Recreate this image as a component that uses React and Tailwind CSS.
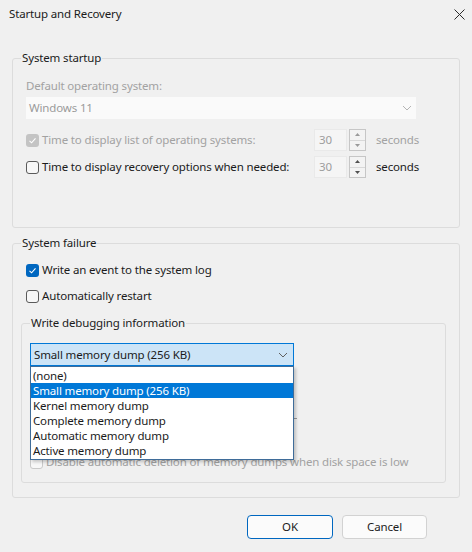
import { useState } from "react";

const dumpTypes = [
    "(none)",
    "Small memory dump (256 KB)",
    "Kernel memory dump",
    "Complete memory dump",
    "Automatic memory dump",
    "Active memory dump"
];

function Check({ checked, disabled }) {
    if (checked) {
        return (
            <span
                className={`flex h-[13px] w-[13px] shrink-0 items-center justify-center rounded-[3px] ${
                    disabled ? "bg-[#c4c4c4]" : "bg-[#0067c0]"
                }`}
            >
                <svg width="9" height="9" viewBox="0 0 9 9" fill="none">
                    <path d="M1.5 4.8 3.6 6.8 7.5 2.3" stroke="white" strokeWidth="1.1" />
                </svg>
            </span>
        );
    }
    return (
        <span
            className={`h-[13px] w-[13px] shrink-0 rounded-[3px] border bg-[#f7f7f7] ${
                disabled ? "border-[#c9c9c9]" : "border-[#5a5a5a]"
            }`}
        />
    );
}

function Chevron({ color }) {
    return (
        <svg width="10" height="6" viewBox="0 0 10 6" fill="none">
            <path d="M1 1 5 5 9 1" stroke={color} strokeWidth="1" />
        </svg>
    );
}

function Spinner({ value, disabled }) {
    const arrow = disabled ? "#9a9a9a" : "#505050";
    return (
        <div className="flex items-center">
            <div className="flex h-[22px] w-[33px] items-center border border-[#e9e9e9] bg-[#f5f5f5] pl-[4px] text-[#9d9d9d]">
                {value}
            </div>
            <div className="ml-[2px] flex h-[22px] w-[17px] flex-col border border-[#c6c6c6] bg-[#f3f3f3]">
                <div className="flex flex-1 items-center justify-center border-b border-[#d8d8d8]">
                    <svg width="5" height="3" viewBox="0 0 5 3">
                        <path d="M0 3 2.5 0 5 3Z" fill={arrow} />
                    </svg>
                </div>
                <div className="flex flex-1 items-center justify-center">
                    <svg width="5" height="3" viewBox="0 0 5 3">
                        <path d="M0 0 2.5 3 5 0Z" fill={arrow} />
                    </svg>
                </div>
            </div>
        </div>
    );
}

export default function App() {
    const [selected] = useState(1);

    return (
        <div
            className="relative h-[552px] w-[472px] overflow-hidden bg-[#f0f0f0] text-[11.5px] leading-[16px] tracking-[-0.15px] text-[#1b1b1b]"
            style={{ fontFamily: '"Noto Sans", "Open Sans", sans-serif' }}
        >
            {/* title bar */}
            <div className="flex h-[28px] items-center justify-between pl-[9px] pr-[7px]">
                <span>Startup and Recovery</span>
                <svg width="11" height="11" viewBox="0 0 11 11" fill="none">
                    <path d="M0.5 0.5 10.5 10.5M10.5 0.5 0.5 10.5" stroke="#2b2b2b" strokeWidth="1" />
                </svg>
            </div>

            <div className="px-[12px] pt-[22px]">
                {/* System startup */}
                <fieldset className="h-[178px] rounded-[3px] border border-[#dcdcdc] px-[13px] pt-[12px]">
                    <legend className="-ml-[5px] px-[1px] leading-[16px]">System startup</legend>
                    <div className="text-[#a2a2a2]">Default operating system:</div>
                    <div className="mt-[3px] flex h-[22px] w-[390px] items-center justify-between bg-[#fafafa] pl-[3px] pr-[4px] text-[#9b9b9b]">
                        <span>Windows 11</span>
                        <Chevron color="#b4b4b4" />
                    </div>

                    <div className="mt-[10px] flex h-[22px] items-center">
                        <div className="flex w-[288px] items-center gap-[3px] text-[#a2a2a2]">
                            <Check checked disabled />
                            <span>Time to display list of operating systems:</span>
                        </div>
                        <Spinner value="30" disabled />
                        <span className="ml-[10px] text-[#a2a2a2]">seconds</span>
                    </div>

                    <div className="mt-[5px] flex h-[22px] items-center">
                        <div className="flex w-[288px] items-center gap-[3px]">
                            <Check />
                            <span>Time to display recovery options when needed:</span>
                        </div>
                        <Spinner value="30" />
                        <span className="ml-[10px]">seconds</span>
                    </div>
                </fieldset>

                {/* System failure */}
                <fieldset className="mt-[7px] h-[263px] rounded-[3px] border border-[#dcdcdc] pl-[13px] pr-[13px] pt-[11px]">
                    <legend className="-ml-[5px] px-[1px] leading-[16px]">System failure</legend>
                    <div className="flex items-center gap-[3px]">
                        <Check checked />
                        <span>Write an event to the system log</span>
                    </div>
                    <div className="mt-[10px] flex items-center gap-[3px]">
                        <Check />
                        <span>Automatically restart</span>
                    </div>

                    <fieldset className="-ml-[5px] mt-[11px] h-[168px] rounded-[3px] border border-[#dcdcdc] px-[8px] pt-[12px]">
                        <legend className="px-[1px] leading-[16px]">Write debugging information</legend>

                        <div className="relative w-[264px]">
                            <div className="flex h-[23px] items-center justify-between border border-[#0078d7] bg-[#cce4f7] pl-[3px] pr-[5px]">
                                <span>{dumpTypes[selected]}</span>
                                <Chevron color="#606060" />
                            </div>
                            {/* open list */}
                            <ul className="absolute left-0 top-full z-10 w-full border border-[#3f6c99] bg-white py-[1px] shadow-[2px_2px_3px_rgba(0,0,0,0.2)]">
                                {dumpTypes.map((t, i) => (
                                    <li
                                        key={t}
                                        className={`h-[15px] pl-[2px] leading-[15px] ${
                                            i === selected ? "bg-[#0078d7] text-white" : ""
                                        }`}
                                    >
                                        {t}
                                    </li>
                                ))}
                            </ul>
                        </div>

                        {/* dump file path box, sits under the open list */}
                        <div className="mt-[30px] h-[23px] w-[267px] border-b border-[#9a9a9a]" />

                        <div className="mt-[35px] flex items-center gap-[3px] text-[#a2a2a2]">
                            <Check disabled />
                            <span>Disable automatic deletion of memory dumps when disk space is low</span>
                        </div>
                    </fieldset>
                </fieldset>

                <div className="mt-[17px] flex justify-end gap-[9px] pr-[33px]">
                    <button className="h-[24px] w-[86px] rounded-[4px] border border-[#0067c0] bg-[#fbfbfb]">
                        OK
                    </button>
                    <button className="h-[24px] w-[85px] rounded-[4px] border border-[#d2d2d2] bg-[#fbfbfb]">
                        Cancel
                    </button>
                </div>
            </div>
        </div>
    );
}
